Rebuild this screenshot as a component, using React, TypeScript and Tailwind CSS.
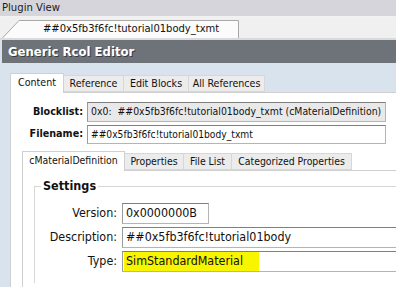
import type { ReactNode } from 'react'

function Tab({ label, active, className = '' }: { label: string; active?: boolean; className?: string }) {
  return (
    <div
      className={
        active
          ? `relative z-10 -mb-px flex h-[20px] items-center justify-center border border-b-0 border-[#d0d0d0] bg-white pb-[2px] ${className}`
          : `flex h-[17px] items-center justify-center border border-l-0 border-[#d7d7d7] bg-[#ececec] ${className}`
      }
    >
      {label}
    </div>
  )
}

function Field({ children, grey, className = '' }: { children: ReactNode; grey?: boolean; className?: string }) {
  return (
    <div
      className={`flex shrink-0 items-center overflow-hidden whitespace-nowrap border border-[#b4b4b4] border-t-[#7f7f7f] border-l-[#9a9a9a] ${
        grey ? 'bg-[#e9e9e9]' : 'bg-white'
      } ${className}`}
    >
      {children}
    </div>
  )
}

export default function App() {
  return (
    <div className="h-[287px] w-[396px] overflow-hidden bg-[#d9e3ee] text-[#111] [font-family:'DejaVu_Sans_Condensed','DejaVu_Sans',sans-serif]">
      {/* Plugin View strip */}
      <div className="flex h-[17px] items-center border-b border-[#f2f2f2] bg-[#d5d5db] pl-[2px] text-[11.2px] text-[#1c1c1c]">
        Plugin View
      </div>

      {/* document tab strip */}
      <div className="flex h-[23px] items-end border-b-2 border-[#dadada] bg-[#f0f0f0] pl-[2px]">
        <div className="relative flex h-[18px] w-[237px] items-center pl-[41px] text-[11.1px]">
          <svg className="absolute left-0 top-0" width="237" height="18" viewBox="0 0 237 18">
            <path d="M0.5 18 L17 0.5 H236.5 V18" fill="#fbfbfb" stroke="#a8a8a8" />
          </svg>
          <span className="relative">##0x5fb3f6fc!tutorial01body_txmt</span>
        </div>
      </div>

      {/* editor header */}
      <div className="ml-[2px] flex h-[23px] items-center bg-[#6e7279] pl-[6px]">
        <span className="text-[13px] font-bold text-white [text-shadow:1px_1px_0_#3a3d42]">Generic Rcol Editor</span>
      </div>

      {/* editor body */}
      <div className="pl-[10px] pt-[10px]">
        <div className="flex items-end text-[10.6px]">
          <Tab label="Content" active className="w-[54px]" />
          <Tab label="Reference" className="w-[60px]" />
          <Tab label="Edit Blocks" className="w-[65px]" />
          <Tab label="All References" className="w-[76px]" />
        </div>

        <div className="h-[200px] border-t border-l border-[#d0d0d0] bg-white pt-[9px]">
          <div className="flex items-center">
            <span className="w-[72px] text-right text-[10.7px] font-bold">Blocklist:</span>
            <Field grey className="ml-[4px] h-[20px] w-[299px] pl-[3px] text-[10.4px]">
              0x0:&nbsp; ##0x5fb3f6fc!tutorial01body_txmt (cMaterialDefinition)
            </Field>
          </div>
          <div className="mt-[3px] flex items-center">
            <span className="w-[72px] text-right text-[10.7px] font-bold">Filename:</span>
            <Field className="ml-[4px] h-[19px] w-[299px] pl-[3px] text-[10.2px]">##0x5fb3f6fc!tutorial01body_txmt</Field>
          </div>

          {/* inner tabs */}
          <div className="mt-[7px] pl-[11px]">
            <div className="flex items-end text-[10.4px]">
              <Tab label="cMaterialDefinition" active className="w-[103px]" />
              <Tab label="Properties" className="w-[59px]" />
              <Tab label="File List" className="w-[48px]" />
              <Tab label="Categorized Properties" className="w-[120px]" />
            </div>
            <div className="h-[120px] border-t border-l border-[#d0d0d0] pl-[11px] pt-[15px]">
              <div className="relative h-[97px] border-t border-l border-[#d6d6d6] pt-[16px] text-[12.4px]">
                <span className="absolute -top-[10px] left-[6px] bg-white px-[2px] text-[12.5px] font-bold">Settings</span>
                <div className="flex items-center">
                  <span className="w-[82px] shrink-0 text-right">Version:</span>
                  <Field className="ml-[5px] h-[21px] w-[87px] pl-[3px]">0x0000000B</Field>
                </div>
                <div className="mt-[3px] flex items-center">
                  <span className="w-[82px] shrink-0 text-right">Description:</span>
                  <Field className="ml-[5px] h-[21px] w-[300px] pl-[3px]">##0x5fb3f6fc!tutorial01body</Field>
                </div>
                <div className="mt-[3px] flex items-center">
                  <span className="w-[82px] shrink-0 text-right">Type:</span>
                  <Field className="ml-[5px] h-[21px] w-[300px] pl-[1px]">
                    <span className="rounded-[3px] bg-[#f8f500] py-[2px] pl-[2px] pr-[16px]">SimStandardMaterial</span>
                  </Field>
                </div>
              </div>
            </div>
          </div>
        </div>
      </div>
    </div>
  )
}
